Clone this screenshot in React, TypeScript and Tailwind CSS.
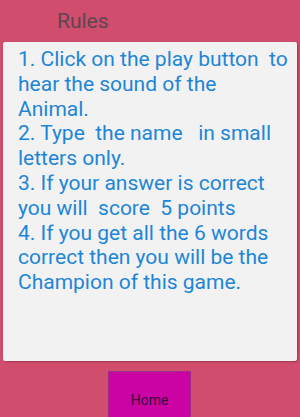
export default function App() {
  const lines = [
    ["1. Click on the play button\u00a0 to", "hear the sound of the", "Animal."],
    ["2. Type\u00a0 the name\u00a0\u00a0 in small", "letters only."],
    ["3. If your answer is correct", "you will\u00a0 score\u00a0 5 points"],
    ["4. If you get all the 6 words", "correct then you will be the", "Champion of this game."],
  ];

  return (
    <div
      className="w-[300px] h-[417px] overflow-hidden bg-[#d14d6d] flex flex-col"
      style={{ fontFamily: "Roboto, 'Noto Sans', sans-serif" }}
    >
      <div className="h-[42px] shrink-0 pl-[57px] pt-[8px] text-[21px] leading-[26px] text-[#5c4652]">
        Rules
      </div>
      <div className="mx-[3px] h-[319px] shrink-0 bg-[#f2f2f2] rounded-[2px] shadow-[1px_1px_2px_rgba(0,0,0,0.25)] pl-[15px] pr-[3px] pt-[5px]">
        {lines.map((rule, i) => (
          <p key={i} className="text-[21px] leading-[24.8px] text-[#1d86d6] whitespace-nowrap">
            {rule.map((part, j) => (
              <span key={j} className="block">
                {part}
              </span>
            ))}
          </p>
        ))}
      </div>
      <div className="flex justify-center pt-[10px] shrink-0">
        <button className="w-[83px] h-[58px] ml-[-1px] bg-[#cc03a4] border border-[#9c2a86] text-[14px] text-[#3a0d3a]">
          Home
        </button>
      </div>
    </div>
  );
}
